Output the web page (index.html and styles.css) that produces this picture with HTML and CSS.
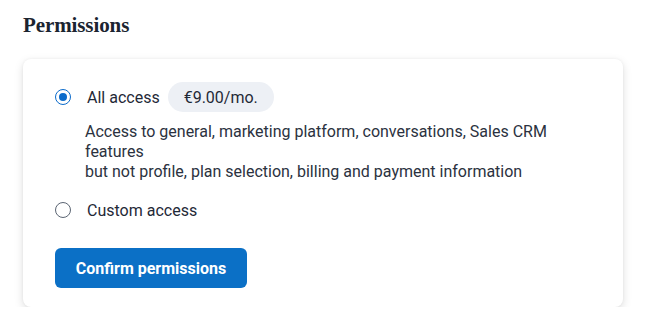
FILE: index.html
```html
<!DOCTYPE html>
<html>
<head>
<meta charset="utf-8">
<link rel="stylesheet" href="styles.css">
</head>
<body>
<div class="page">
  <h2 class="title">Permissions</h2>
  <div class="card">
    <div class="option">
      <span class="radio checked"><span class="dot"></span></span>
      <span class="label">All access</span>
      <span class="pill">€9.00/mo.</span>
    </div>
    <p class="desc">Access to general, marketing platform, conversations, Sales CRM features<br>but not profile, plan selection, billing and payment information</p>
    <div class="option option-2">
      <span class="radio"></span>
      <span class="label">Custom access</span>
    </div>
    <button class="btn">Confirm permissions</button>
  </div>
</div>
</body>
</html>
```

FILE: styles.css
```css
* { box-sizing: border-box; }
html, body { margin: 0; background: #fff; }
body { font-family: Roboto, "Liberation Sans", sans-serif; color: #1f2937; }
.page { padding: 12px 23px 0 23px; }
.title {
  font-family: "Liberation Serif", "DejaVu Serif", serif;
  font-weight: 700;
  font-size: 21px;
  letter-spacing: -0.1px;
  color: #1b2430;
  margin: 0 0 21px 0;
  line-height: 26px;
}
.card {
  background: #fff;
  border-radius: 8px;
  box-shadow: 0 3px 10px rgba(0,0,0,0.13), 0 0 3px rgba(0,0,0,0.05);
  padding: 23px 32px 19px 32px;
  height: 248px;
}
.option { display: flex; align-items: center; height: 30px; }
.radio {
  width: 16px; height: 16px; border-radius: 50%;
  border: 1.5px solid #5b6573;
  display: flex; align-items: center; justify-content: center;
  flex: none;
}
.radio.checked { border-color: #0b6bcb; }
.dot { width: 8px; height: 8px; border-radius: 50%; background: #0b6bcb; }
.label { margin-left: 16px; font-size: 16px; color: #1f2937; }
.pill {
  margin-left: 8px;
  background: #edf0f5;
  border-radius: 15px;
  height: 30px;
  padding: 0 16px;
  display: flex; align-items: center;
  font-size: 16px;
  color: #1f2937;
}
.desc {
  margin: 10px 0 0 30px;
  font-size: 16px;
  line-height: 20px;
  color: #2b3240;
  width: 480px;
}
.option-2 { margin-top: 13px; }
.btn {
  margin-top: 23px;
  background: #0b70c6;
  color: #fff;
  border: none;
  border-radius: 6px;
  height: 40px;
  width: 192px;
  font-family: Roboto, "Liberation Sans", sans-serif;
  font-weight: 700;
  font-size: 16px;
  display: block;
  cursor: pointer;
}
```
